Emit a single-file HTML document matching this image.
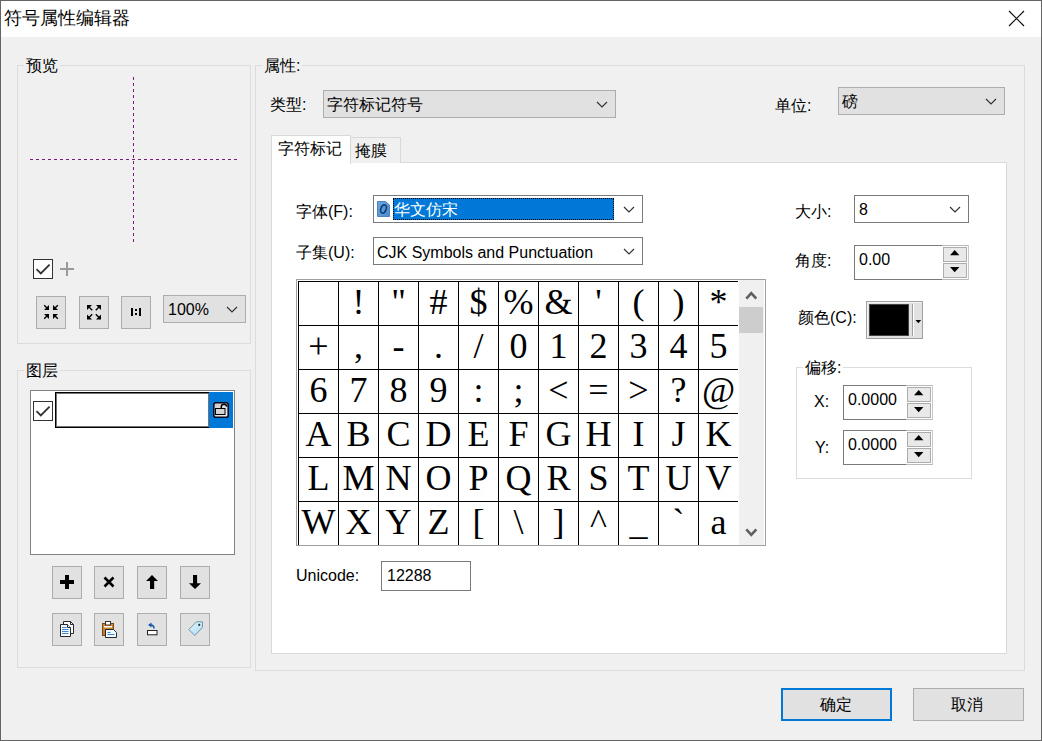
<!DOCTYPE html>
<html><head><meta charset="utf-8">
<style>
*{box-sizing:border-box;margin:0;padding:0}
html,body{width:1042px;height:741px;overflow:hidden;background:#f0f0f0}
body{position:relative;font-family:"Liberation Sans",sans-serif;font-size:16px;color:#000}
.a{position:absolute}
.t{position:absolute;white-space:nowrap;line-height:1}
.grp{position:absolute;border:1px solid #dcdcdc}
.glab{position:absolute;background:#f0f0f0;padding:0 2px;line-height:1;white-space:nowrap}
.btn{position:absolute;background:#e1e1e1;border:1px solid #adadad}
.combo{position:absolute;background:#e1e1e1;border:1px solid #adadad}
.ecombo{position:absolute;background:#fff;border:1px solid #7a7a7a}
.grid{position:absolute;left:298px;top:281px;width:440px;height:264px;overflow:hidden}
.cell{position:absolute;width:41px;height:45px;border:1px solid #000;font-family:"Liberation Serif",serif;font-size:36px;text-align:center;line-height:1}
.cell span{position:absolute;left:0;right:0;top:2px}
.sb{background:#e9e9e9;border:1px solid #adadad}
</style></head><body>
<div class="a" style="left:0;top:0;width:1042px;height:741px;border:1px solid #646464"></div>
<div class="a" style="left:1px;top:1px;width:1040px;height:36px;background:#fff"></div>
<div class="t" style="left:4px;top:9px;font-size:18px">符号属性编辑器</div>
<svg class="a" style="left:1008px;top:10px" width="17" height="17"><path d="M1 1L16 16M16 1L1 16" stroke="#111" stroke-width="1.2"/></svg>

<div class="grp" style="left:17px;top:65px;width:234px;height:279px"></div>
<div class="glab" style="left:24px;top:58px">预览</div>
<svg class="a" style="left:0;top:0" width="260" height="260">
<line x1="133.5" y1="77" x2="133.5" y2="243" stroke="#7a1a7a" stroke-width="1" stroke-dasharray="3 3"/>
<line x1="30" y1="159.5" x2="238" y2="159.5" stroke="#7a1a7a" stroke-width="1" stroke-dasharray="3 3"/>
</svg>
<div class="a" style="left:33px;top:259px;width:20px;height:20px;border:1.5px solid #333;background:#fff"></div>
<svg class="a" style="left:33px;top:259px" width="20" height="20"><path d="M3.5 10.2L7.8 14.4L16.6 5.6" fill="none" stroke="#333" stroke-width="1.8"/></svg>
<svg class="a" style="left:60px;top:262px" width="15" height="15"><path d="M7 0V14M0 7H14" stroke="#9a9a9a" stroke-width="2"/></svg>
<div class="btn" style="left:36px;top:296px;width:30px;height:33px"></div><div class="btn" style="left:79px;top:296px;width:30px;height:33px"></div><div class="btn" style="left:121px;top:296px;width:30px;height:33px"></div>
<svg class="a" style="left:36px;top:296px" width="30" height="33"><g fill="#000" stroke="none">
<path d="M8 14H13V9Z"/><path d="M17 9V14H22Z"/><path d="M8 18H13V23Z"/><path d="M17 23V18H22Z"/>
</g><g stroke="#000" stroke-width="1.4" fill="none">
<path d="M8.2 9.2L11.5 12.5M21.8 9.2L18.5 12.5M8.2 22.8L11.5 19.5M21.8 22.8L18.5 19.5"/>
</g></svg>
<svg class="a" style="left:79px;top:296px" width="30" height="33"><g fill="#000" stroke="none">
<path d="M8 9H13L8 14Z"/><path d="M22 9H17L22 14Z"/><path d="M8 23.5H13L8 18.5Z"/><path d="M22 23.5H17L22 18.5Z"/>
</g><g stroke="#000" stroke-width="1.4" fill="none">
<path d="M10 11L13.2 14.2M20 11L16.8 14.2M10 21.5L13.2 18.3M20 21.5L16.8 18.3"/>
</g></svg>
<svg class="a" style="left:121px;top:296px" width="30" height="33"><g fill="#000">
<rect x="10" y="12" width="2" height="8"/><rect x="14" y="13" width="2" height="2"/><rect x="14" y="17" width="2" height="2"/><rect x="18" y="12" width="2" height="8"/>
</g></svg>
<div class="combo" style="left:163px;top:295px;width:83px;height:28px"></div>
<div class="t" style="left:168px;top:302px">100%</div>
<svg class="a" style="left:226px;top:305.5px" width="12" height="7"><path d="M1 1L6 6L11 1" fill="none" stroke="#333" stroke-width="1.2"/></svg>

<div class="grp" style="left:17px;top:370px;width:234px;height:298px"></div>
<div class="glab" style="left:24px;top:363px">图层</div>
<div class="a" style="left:30px;top:390px;width:205px;height:165px;background:#fff;border:1px solid #828282"></div>
<div class="a" style="left:33px;top:401px;width:20px;height:20px;border:1px solid #333;background:#fff"></div>
<svg class="a" style="left:33px;top:401px" width="20" height="20"><path d="M3.5 10.2L7.8 14.4L16.6 5.6" fill="none" stroke="#333" stroke-width="1.8"/></svg>
<div class="a" style="left:55px;top:392px;width:155px;height:36px;border:1px solid #000;box-shadow:inset 0 0 0 1px rgba(0,0,0,.55);background:#fff"></div>
<div class="a" style="left:209px;top:392px;width:24px;height:36px;background:#0078d7"></div>
<svg class="a" style="left:213px;top:402px" width="16" height="16">
<defs><linearGradient id="lg" x1="0" y1="0" x2="1" y2="1"><stop offset="0" stop-color="#c8c8c8"/><stop offset="1" stop-color="#f4f4f4"/></linearGradient></defs>
<rect x="0.8" y="0.8" width="14.4" height="14.4" rx="2" fill="url(#lg)" stroke="#0a0a1e" stroke-width="1.6"/>
<rect x="2.5" y="6.5" width="9.5" height="6" fill="#d4d4d4" stroke="#000" stroke-width="1"/>
<path d="M8.3 6.5V4.6Q8.3 2.2 11 2.2Q13.6 2.2 13.7 4.6" fill="none" stroke="#000" stroke-width="1.5"/>
</svg>

<div class="btn" style="left:52px;top:566px;width:30px;height:33px"></div><div class="btn" style="left:94px;top:566px;width:30px;height:33px"></div><div class="btn" style="left:137px;top:566px;width:30px;height:33px"></div><div class="btn" style="left:180px;top:566px;width:30px;height:33px"></div>
<div class="btn" style="left:52px;top:613px;width:30px;height:33px"></div><div class="btn" style="left:94px;top:613px;width:30px;height:33px"></div><div class="btn" style="left:137px;top:613px;width:30px;height:33px"></div><div class="btn" style="left:180px;top:613px;width:30px;height:33px"></div>
<svg class="a" style="left:52px;top:566px" width="30" height="33"><path d="M8 14H22V18H8Z M13 9H17V23H13Z" fill="#000"/></svg>
<svg class="a" style="left:94px;top:566px" width="30" height="33"><path d="M10.5 11.5L19.5 20.5M19.5 11.5L10.5 20.5" stroke="#000" stroke-width="2.6"/></svg>
<svg class="a" style="left:137px;top:566px" width="30" height="33"><path d="M15 9L21 15H17.2V23H13V15H9Z" fill="#000"/></svg>
<svg class="a" style="left:180px;top:566px" width="30" height="33"><path d="M13 9H17.1V17.2H21L15 23L9 17.2H13Z" fill="#000"/></svg>
<svg class="a" style="left:52px;top:613px" width="30" height="33">
<path d="M11.5 8.5H18.5L21.5 11.5V20.5H11.5Z" fill="#fff" stroke="#2a2a2a" stroke-width="1"/>
<path d="M18.5 8.5V11.5H21.5" fill="none" stroke="#2a2a2a" stroke-width="1"/>
<path d="M8.5 11.5H15.5L18.5 14.5V23.5H8.5Z" fill="#f4faff" stroke="#2a2a2a" stroke-width="1"/>
<path d="M15.5 11.5V14.5H18.5" fill="#fff" stroke="#2a2a2a" stroke-width="1"/>
<path d="M10 14.5H14.5M10 16.5H16.5M10 18.5H16.5M10 20.5H16.5" stroke="#3b8ad4" stroke-width="1"/>
</svg>
<svg class="a" style="left:94px;top:613px" width="30" height="33">
<defs><linearGradient id="pg" x1="0" y1="0" x2="0" y2="1"><stop offset="0" stop-color="#d48a34"/><stop offset="1" stop-color="#b9762a"/></linearGradient></defs>
<rect x="8.5" y="10.5" width="11" height="12" fill="url(#pg)" stroke="#7a4a14" stroke-width="1"/>
<rect x="10" y="13" width="8" height="1.5" fill="#fff"/>
<rect x="11.5" y="8.5" width="5" height="3.5" fill="#fff" stroke="#333" stroke-width="1"/>
<path d="M11.5 16.5H19.5L22.5 19.5V24.5H11.5Z" fill="#f4faff" stroke="#2a2a2a" stroke-width="1"/>
<path d="M13.5 19.5H16.5M13.5 21.5H20.5" stroke="#3b8ad4" stroke-width="1"/>
</svg>
<svg class="a" style="left:137px;top:613px" width="30" height="33">
<rect x="10.5" y="17.5" width="9.5" height="4.3" fill="#fff" stroke="#222" stroke-width="1"/>
<path d="M17 15.5Q17 12 13.5 12" fill="none" stroke="#1a5aa8" stroke-width="1.6"/>
<path d="M11 12L14.5 9.5V14.5Z" fill="#1a5aa8"/>
</svg>
<svg class="a" style="left:180px;top:613px" width="30" height="33">
<defs><linearGradient id="tg" x1="0" y1="0" x2="1" y2="1"><stop offset="0" stop-color="#e6f6fd"/><stop offset="1" stop-color="#a9d8f2"/></linearGradient></defs>
<path d="M8.8 16.5L16.5 8.8H22.5V14.5L14.8 22.5Z" fill="url(#tg)" stroke="#7596a4" stroke-width="1"/>
<circle cx="19.2" cy="11.9" r="1.1" fill="#2a3a44"/>
</svg>

<div class="grp" style="left:255px;top:65px;width:770px;height:606px"></div>
<div class="glab" style="left:262px;top:58px">属性:</div>
<div class="t" style="left:270px;top:97px">类型:</div>
<div class="combo" style="left:323px;top:90px;width:293px;height:28px"></div>
<div class="t" style="left:327px;top:97px">字符标记符号</div>
<svg class="a" style="left:596px;top:100.5px" width="12" height="7"><path d="M1 1L6 6L11 1" fill="none" stroke="#333" stroke-width="1.2"/></svg>
<div class="t" style="left:775px;top:98px">单位:</div>
<div class="combo" style="left:838px;top:87px;width:167px;height:28px"></div>
<div class="t" style="left:842px;top:94px">磅</div>
<svg class="a" style="left:985px;top:97.5px" width="12" height="7"><path d="M1 1L6 6L11 1" fill="none" stroke="#333" stroke-width="1.2"/></svg>

<div class="a" style="left:271px;top:162px;width:736px;height:492px;background:#fff;border:1px solid #d9d9d9"></div>
<div class="a" style="left:350px;top:137px;width:51px;height:26px;background:#f0f0f0;border:1px solid #d9d9d9;border-bottom:none"></div>
<div class="a" style="left:271px;top:135px;width:80px;height:29px;background:#fff;border:1px solid #d9d9d9;border-bottom:none"></div>
<div class="t" style="left:278px;top:141px">字符标记</div>
<div class="t" style="left:355px;top:143px">掩膜</div>

<div class="t" style="left:296px;top:204px">字体(F):</div>
<div class="ecombo" style="left:373px;top:195px;width:270px;height:28px"></div>
<svg class="a" style="left:377px;top:201px" width="14" height="16">
<defs><linearGradient id="fg" x1="0" y1="0" x2="1" y2="1"><stop offset="0" stop-color="#6aa6dc"/><stop offset="1" stop-color="#4f8ccc"/></linearGradient></defs>
<path d="M0.5 0.5H8.5L12.5 4V15.5H0.5Z" fill="url(#fg)" stroke="#3a6fb0" stroke-width="0.8"/>
<ellipse cx="6.5" cy="8" rx="2.6" ry="4.2" transform="rotate(20 6.5 8)" fill="none" stroke="#123f7a" stroke-width="1.6"/>
</svg>
<div class="a" style="left:393px;top:198px;width:221px;height:22px;background:#0078d7;border:1px dotted #000"></div>
<div class="t" style="left:394px;top:202px;color:#fff">华文仿宋</div>
<svg class="a" style="left:623px;top:205.5px" width="12" height="7"><path d="M1 1L6 6L11 1" fill="none" stroke="#333" stroke-width="1.2"/></svg>
<div class="t" style="left:296px;top:245px">子集(U):</div>
<div class="ecombo" style="left:373px;top:237px;width:270px;height:28px"></div>
<div class="t" style="left:377px;top:245px">CJK Symbols and Punctuation</div>
<svg class="a" style="left:623px;top:247.5px" width="12" height="7"><path d="M1 1L6 6L11 1" fill="none" stroke="#333" stroke-width="1.2"/></svg>

<div class="a" style="left:296px;top:279px;width:470px;height:267px;background:#fff;border:1px solid #a0a0a0"></div>
<div class="grid"><div class="cell" style="left:0px;top:0px"><span> </span></div><div class="cell" style="left:40px;top:0px"><span>!</span></div><div class="cell" style="left:80px;top:0px"><span>&quot;</span></div><div class="cell" style="left:120px;top:0px"><span>#</span></div><div class="cell" style="left:160px;top:0px"><span>$</span></div><div class="cell" style="left:200px;top:0px"><span>%</span></div><div class="cell" style="left:240px;top:0px"><span>&amp;</span></div><div class="cell" style="left:280px;top:0px"><span>&#x27;</span></div><div class="cell" style="left:320px;top:0px"><span>(</span></div><div class="cell" style="left:360px;top:0px"><span>)</span></div><div class="cell" style="left:400px;top:0px"><span>*</span></div><div class="cell" style="left:0px;top:44px"><span>+</span></div><div class="cell" style="left:40px;top:44px"><span>,</span></div><div class="cell" style="left:80px;top:44px"><span>-</span></div><div class="cell" style="left:120px;top:44px"><span>.</span></div><div class="cell" style="left:160px;top:44px"><span>/</span></div><div class="cell" style="left:200px;top:44px"><span>0</span></div><div class="cell" style="left:240px;top:44px"><span>1</span></div><div class="cell" style="left:280px;top:44px"><span>2</span></div><div class="cell" style="left:320px;top:44px"><span>3</span></div><div class="cell" style="left:360px;top:44px"><span>4</span></div><div class="cell" style="left:400px;top:44px"><span>5</span></div><div class="cell" style="left:0px;top:88px"><span>6</span></div><div class="cell" style="left:40px;top:88px"><span>7</span></div><div class="cell" style="left:80px;top:88px"><span>8</span></div><div class="cell" style="left:120px;top:88px"><span>9</span></div><div class="cell" style="left:160px;top:88px"><span>:</span></div><div class="cell" style="left:200px;top:88px"><span>;</span></div><div class="cell" style="left:240px;top:88px"><span>&lt;</span></div><div class="cell" style="left:280px;top:88px"><span>=</span></div><div class="cell" style="left:320px;top:88px"><span>&gt;</span></div><div class="cell" style="left:360px;top:88px"><span>?</span></div><div class="cell" style="left:400px;top:88px"><span>@</span></div><div class="cell" style="left:0px;top:132px"><span>A</span></div><div class="cell" style="left:40px;top:132px"><span>B</span></div><div class="cell" style="left:80px;top:132px"><span>C</span></div><div class="cell" style="left:120px;top:132px"><span>D</span></div><div class="cell" style="left:160px;top:132px"><span>E</span></div><div class="cell" style="left:200px;top:132px"><span>F</span></div><div class="cell" style="left:240px;top:132px"><span>G</span></div><div class="cell" style="left:280px;top:132px"><span>H</span></div><div class="cell" style="left:320px;top:132px"><span>I</span></div><div class="cell" style="left:360px;top:132px"><span>J</span></div><div class="cell" style="left:400px;top:132px"><span>K</span></div><div class="cell" style="left:0px;top:176px"><span>L</span></div><div class="cell" style="left:40px;top:176px"><span>M</span></div><div class="cell" style="left:80px;top:176px"><span>N</span></div><div class="cell" style="left:120px;top:176px"><span>O</span></div><div class="cell" style="left:160px;top:176px"><span>P</span></div><div class="cell" style="left:200px;top:176px"><span>Q</span></div><div class="cell" style="left:240px;top:176px"><span>R</span></div><div class="cell" style="left:280px;top:176px"><span>S</span></div><div class="cell" style="left:320px;top:176px"><span>T</span></div><div class="cell" style="left:360px;top:176px"><span>U</span></div><div class="cell" style="left:400px;top:176px"><span>V</span></div><div class="cell" style="left:0px;top:220px"><span>W</span></div><div class="cell" style="left:40px;top:220px"><span>X</span></div><div class="cell" style="left:80px;top:220px"><span>Y</span></div><div class="cell" style="left:120px;top:220px"><span>Z</span></div><div class="cell" style="left:160px;top:220px"><span>[</span></div><div class="cell" style="left:200px;top:220px"><span>\</span></div><div class="cell" style="left:240px;top:220px"><span>]</span></div><div class="cell" style="left:280px;top:220px"><span>^</span></div><div class="cell" style="left:320px;top:220px"><span>_</span></div><div class="cell" style="left:360px;top:220px"><span>`</span></div><div class="cell" style="left:400px;top:220px"><span>a</span></div></div>
<div class="a" style="left:739px;top:280px;width:25px;height:265px;background:#f0f0f0"></div>
<div class="a" style="left:739px;top:307px;width:24px;height:26px;background:#cdcdcd"></div>
<svg class="a" style="left:745px;top:290px" width="13" height="11"><path d="M1.3 8.7L6.3 3.2L11.3 8.7" fill="none" stroke="#606060" stroke-width="2.6"/></svg>
<svg class="a" style="left:745px;top:527px" width="13" height="11"><path d="M1.3 2.3L6.3 7.8L11.3 2.3" fill="none" stroke="#606060" stroke-width="2.6"/></svg>

<div class="t" style="left:296px;top:568px">Unicode:</div>
<div class="a" style="left:381px;top:561px;width:90px;height:30px;background:#fff;border:1px solid #7a7a7a"></div>
<div class="t" style="left:387px;top:568px">12288</div>

<div class="t" style="left:795px;top:204px">大小:</div>
<div class="ecombo" style="left:854px;top:195px;width:115px;height:28px"></div>
<div class="t" style="left:859px;top:202px">8</div>
<svg class="a" style="left:949px;top:205.5px" width="12" height="7"><path d="M1 1L6 6L11 1" fill="none" stroke="#333" stroke-width="1.2"/></svg>
<div class="t" style="left:795px;top:253px">角度:</div>
<div class="a" style="left:854px;top:245px;width:115px;height:35px;background:#fff;border:1px solid #7a7a7a;border-right:none"></div><div class="a" style="left:942px;top:245px;width:27px;height:35px;border:1px solid #c8c8c8;border-left:none;background:#fff"></div><div class="a" style="left:942px;top:245px;width:26px;height:1px;background:#b9b9b9"></div><div class="a" style="left:942px;top:279px;width:26px;height:1px;background:#b9b9b9"></div><div class="a sb" style="left:943px;top:247px;width:24px;height:15px"></div><div class="a sb" style="left:943px;top:263px;width:24px;height:15px"></div><svg class="a" style="left:949.8px;top:250px" width="10" height="6"><path d="M0 5.2L4.7 0L9.4 5.2Z" fill="#000"/></svg><svg class="a" style="left:949.8px;top:267px" width="10" height="6"><path d="M0 0L4.7 5.2L9.4 0Z" fill="#000"/></svg>
<div class="t" style="left:859px;top:252px">0.00</div>
<div class="t" style="left:798px;top:310px">颜色(C):</div>
<div class="a" style="left:866px;top:301px;width:57px;height:38px;background:#e1e1e1;border:1px solid #a0a0a0;box-shadow:inset 1px 1px 0 #f4f4f4"></div>
<div class="a" style="left:869px;top:304px;width:40px;height:32px;background:#000;border:1px solid #444"></div>
<div class="a" style="left:912px;top:304px;width:1px;height:32px;background:#a0a0a0"></div>
<div class="a" style="left:913px;top:304px;width:1px;height:32px;background:#fff"></div>
<svg class="a" style="left:915px;top:320px" width="7" height="4"><path d="M0.5 0H6.2L3.35 3.3Z" fill="#000"/></svg>

<div class="a" style="left:796px;top:367px;width:176px;height:112px;border:1px solid #dcdcdc"></div>
<div class="glab" style="left:803px;top:360px;background:#fff">偏移:</div>
<div class="t" style="left:814px;top:394px">X:</div>
<div class="a" style="left:843px;top:385px;width:90px;height:35px;background:#fff;border:1px solid #7a7a7a;border-right:none"></div><div class="a" style="left:906px;top:385px;width:27px;height:35px;border:1px solid #c8c8c8;border-left:none;background:#fff"></div><div class="a" style="left:906px;top:385px;width:26px;height:1px;background:#b9b9b9"></div><div class="a" style="left:906px;top:419px;width:26px;height:1px;background:#b9b9b9"></div><div class="a sb" style="left:907px;top:387px;width:24px;height:15px"></div><div class="a sb" style="left:907px;top:403px;width:24px;height:15px"></div><svg class="a" style="left:913.8px;top:390px" width="10" height="6"><path d="M0 5.2L4.7 0L9.4 5.2Z" fill="#000"/></svg><svg class="a" style="left:913.8px;top:407px" width="10" height="6"><path d="M0 0L4.7 5.2L9.4 0Z" fill="#000"/></svg>
<div class="t" style="left:848px;top:392px">0.0000</div>
<div class="t" style="left:815px;top:440px">Y:</div>
<div class="a" style="left:843px;top:430px;width:90px;height:35px;background:#fff;border:1px solid #7a7a7a;border-right:none"></div><div class="a" style="left:906px;top:430px;width:27px;height:35px;border:1px solid #c8c8c8;border-left:none;background:#fff"></div><div class="a" style="left:906px;top:430px;width:26px;height:1px;background:#b9b9b9"></div><div class="a" style="left:906px;top:464px;width:26px;height:1px;background:#b9b9b9"></div><div class="a sb" style="left:907px;top:432px;width:24px;height:15px"></div><div class="a sb" style="left:907px;top:448px;width:24px;height:15px"></div><svg class="a" style="left:913.8px;top:435px" width="10" height="6"><path d="M0 5.2L4.7 0L9.4 5.2Z" fill="#000"/></svg><svg class="a" style="left:913.8px;top:452px" width="10" height="6"><path d="M0 0L4.7 5.2L9.4 0Z" fill="#000"/></svg>
<div class="t" style="left:848px;top:437px">0.0000</div>

<div class="btn" style="left:781px;top:688px;width:111px;height:33px;border:2px solid #0078d7"></div>
<div class="t" style="left:820px;top:697px">确定</div>
<div class="btn" style="left:913px;top:688px;width:111px;height:33px"></div>
<div class="t" style="left:951px;top:697px">取消</div>
</body></html>
